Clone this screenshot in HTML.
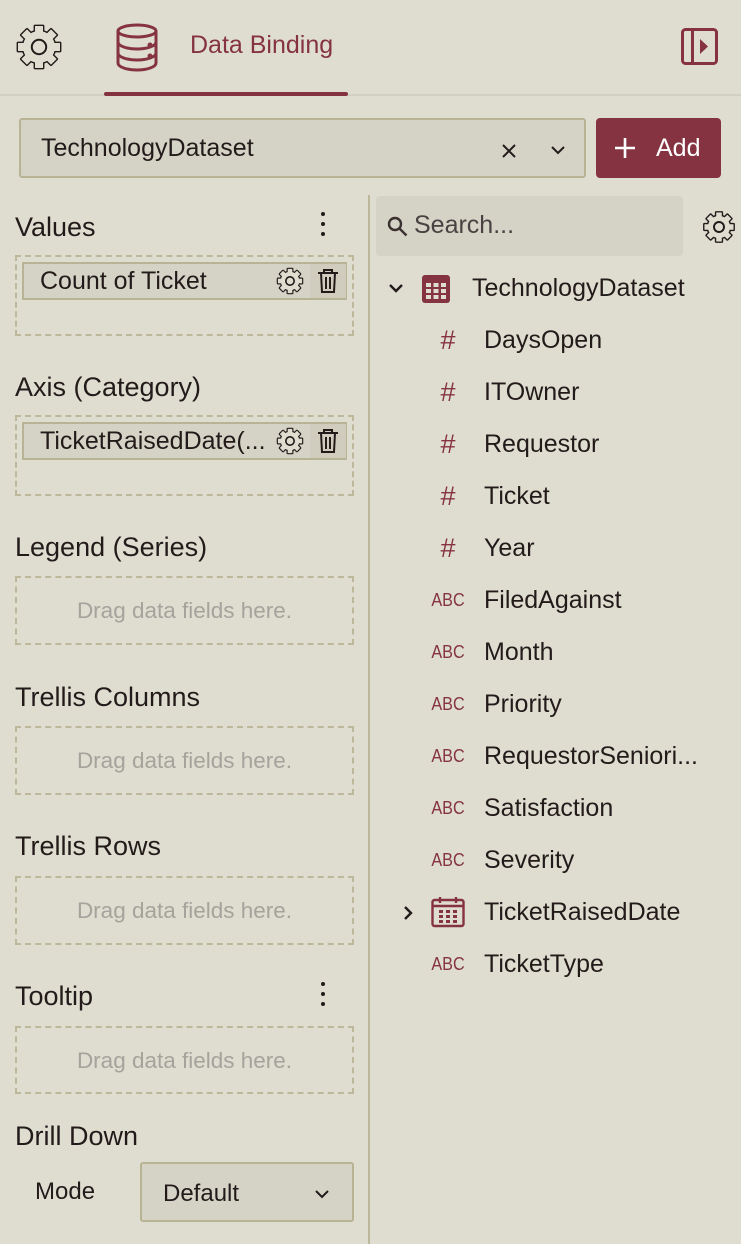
<!DOCTYPE html>
<html><head><meta charset="utf-8"><style>
*{box-sizing:border-box;margin:0;padding:0}
body{width:741px;height:1244px;background:#dfddd0;font-family:"Liberation Sans",sans-serif;color:#231a1a;position:relative;overflow:hidden}
.a{position:absolute}
.lbl{position:absolute;left:15px;font-size:27px;line-height:30px}
.dash{position:absolute;left:15px;width:339px;border:2px dashed #bdb89c}
.ph{color:#a5a39c;font-size:22.5px;text-align:center;line-height:65px}
.item{position:absolute;left:22px;width:325px;height:38px;background:#d5d3c6;border:2px solid #b8b394;font-size:25px;line-height:34px;padding-left:16px}
.row{position:absolute;left:484px;font-size:25px;line-height:30px}
.ic{position:absolute;left:432px;width:32px;text-align:center;color:#853340;line-height:30px}
.hash{font-size:27px}
.abc{font-size:18px;left:428px;width:40px;transform:scaleX(.9)}
</style></head><body>
<svg width="0" height="0" style="position:absolute"><defs>
<g id="gs"><circle cx="12" cy="12" r="8"/><g id="t"><rect x="10" y="1.5" width="4" height="5"/><rect x="10" y="17.5" width="4" height="5"/></g><use href="#t" transform="rotate(45 12 12)"/><use href="#t" transform="rotate(90 12 12)"/><use href="#t" transform="rotate(135 12 12)"/></g>
<g id="gear"><use href="#gs" fill="#231a1a" stroke="#231a1a" stroke-width="2" stroke-linejoin="round"/><use href="#gs" fill="#dfddd0"/><circle cx="12" cy="12" r="3.6" fill="none" stroke="#231a1a" stroke-width="1.4"/></g>
<g id="gear2"><use href="#gs" fill="#231a1a" stroke="#231a1a" stroke-width="1.4" stroke-linejoin="round"/><use href="#gs" fill="#dfddd0"/><circle cx="12" cy="12" r="3.6" fill="none" stroke="#231a1a" stroke-width="1"/></g>
</defs></svg>

<svg class="a" style="left:13px;top:21px" width="52" height="52" viewBox="-1 -1 26 26"><use href="#gear2"/></svg>
<svg class="a" style="left:114px;top:22px" width="46" height="50" viewBox="0 0 46 50" fill="none" stroke="#853340" stroke-width="3"><ellipse cx="23" cy="9" rx="19" ry="6"/><path d="M4 9v32c0 4 9 7 19 7s19-3 19-7V9M4 20c0 4 9 7 19 7s19-3 19-7M4 31c0 4 9 7 19 7s19-3 19-7"/><circle cx="36" cy="23" r="1" fill="#853340"/><circle cx="36" cy="34" r="1" fill="#853340"/></svg>
<div class="a" style="left:190px;top:31px;font-size:25px;color:#853340">Data Binding</div>
<div class="a" style="left:0;top:94px;width:741px;height:2px;background:#d2d0c4"></div>
<div class="a" style="left:104px;top:92px;width:244px;height:4px;background:#853340;border-radius:2px"></div>
<svg class="a" style="left:681px;top:28px" width="37" height="37" viewBox="0 0 37 37"><rect x="1.5" y="1.5" width="34" height="34" rx="3" fill="none" stroke="#853340" stroke-width="3"/><rect x="10" y="2" width="3" height="33" fill="#853340"/><path d="M19 11l8 7.5-8 7.5z" fill="#853340"/></svg>

<div class="a" style="left:19px;top:118px;width:567px;height:60px;background:#d5d3c6;border:2px solid #b8b394;border-radius:3px"></div>
<div class="a" style="left:41px;top:134px;font-size:25px">TechnologyDataset</div>
<svg class="a" style="left:501px;top:143px" width="16" height="16"><path d="M2 2l12 12M14 2L2 14" stroke="#231a1a" stroke-width="2"/></svg>
<svg class="a" style="left:550px;top:144px" width="16" height="12"><path d="M2 3l6 6 6-6" fill="none" stroke="#231a1a" stroke-width="2"/></svg>
<div class="a" style="left:596px;top:118px;width:125px;height:60px;background:#853340;border-radius:4px;color:#fff;font-size:25px;line-height:60px"><svg style="position:absolute;left:18px;top:19px" width="22" height="22"><path d="M11 1v20M1 11h20" stroke="#fff" stroke-width="2.6"/></svg><span style="position:absolute;left:60px">Add</span></div>

<div class="a" style="left:368px;top:195px;width:2px;height:1049px;background:#bdb89c"></div>

<div class="lbl" style="top:212px">Values</div>
<div class="a" style="left:321px;top:212px;width:4px;font-size:0"><div style="width:4px;height:4px;background:#231a1a;border-radius:2px;margin-bottom:6px"></div><div style="width:4px;height:4px;background:#231a1a;border-radius:2px;margin-bottom:6px"></div><div style="width:4px;height:4px;background:#231a1a;border-radius:2px"></div></div>
<div class="dash" style="top:255px;height:81px"></div>
<div class="item" style="top:262px">Count of Ticket</div>

<div class="lbl" style="top:372px">Axis (Category)</div>
<div class="dash" style="top:415px;height:81px"></div>
<div class="item" style="top:422px">TicketRaisedDate(...</div>

<svg class="a" style="left:275px;top:266px" width="30" height="30" viewBox="-1 -1 26 26"><use href="#gear"/></svg>
<div class="a" style="left:310px;top:264px;width:36px;height:34px;background:#d0cdbf"></div>
<svg class="a" style="left:316px;top:268px" width="24" height="26" viewBox="0 0 24 26" fill="none" stroke="#231a1a" stroke-width="2"><path d="M2 5h20M8 5V2h8v3M5 5l1 19h12l1-19M10 9v12M14 9v12"/></svg>
<svg class="a" style="left:275px;top:426px" width="30" height="30" viewBox="-1 -1 26 26"><use href="#gear"/></svg>
<div class="a" style="left:310px;top:424px;width:36px;height:34px;background:#d0cdbf"></div>
<svg class="a" style="left:316px;top:428px" width="24" height="26" viewBox="0 0 24 26" fill="none" stroke="#231a1a" stroke-width="2"><path d="M2 5h20M8 5V2h8v3M5 5l1 19h12l1-19M10 9v12M14 9v12"/></svg>

<div class="lbl" style="top:532px">Legend (Series)</div>
<div class="dash ph" style="top:576px;height:69px">Drag data fields here.</div>
<div class="lbl" style="top:682px">Trellis Columns</div>
<div class="dash ph" style="top:726px;height:69px">Drag data fields here.</div>
<div class="lbl" style="top:831px">Trellis Rows</div>
<div class="dash ph" style="top:876px;height:69px">Drag data fields here.</div>
<div class="lbl" style="top:981px">Tooltip</div>
<div class="a" style="left:321px;top:982px;width:4px;font-size:0"><div style="width:4px;height:4px;background:#231a1a;border-radius:2px;margin-bottom:6px"></div><div style="width:4px;height:4px;background:#231a1a;border-radius:2px;margin-bottom:6px"></div><div style="width:4px;height:4px;background:#231a1a;border-radius:2px"></div></div>
<div class="dash ph" style="top:1026px;height:68px">Drag data fields here.</div>
<div class="lbl" style="top:1121px">Drill Down</div>
<div class="a" style="left:35px;top:1178px;font-size:24px">Mode</div>
<div class="a" style="left:140px;top:1162px;width:214px;height:60px;background:#d5d3c6;border:2px solid #b8b394;border-radius:3px;font-size:24px;line-height:60px;padding-left:21px">Default</div>
<svg class="a" style="left:314px;top:1188px" width="16" height="12"><path d="M2 3l6 6 6-6" fill="none" stroke="#231a1a" stroke-width="2"/></svg>

<div class="a" style="left:376px;top:196px;width:307px;height:60px;background:#d5d3c6;border-radius:4px"></div>
<svg class="a" style="left:387px;top:216px" width="22" height="22" fill="none" stroke="#3a3030" stroke-width="2.4"><circle cx="8" cy="8" r="6"/><path d="M12.5 12.5l7 7"/></svg>
<div class="a" style="left:414px;top:211px;font-size:25px;color:#4a4242">Search...</div>
<svg class="a" style="left:701px;top:209px" width="36" height="36" viewBox="-1 -1 26 26"><use href="#gear"/></svg>

<svg class="a" style="left:388px;top:282px" width="16" height="12"><path d="M2 3l6 6 6-6" fill="none" stroke="#231a1a" stroke-width="2.4"/></svg>
<svg class="a" style="left:422px;top:275px" width="28" height="28" viewBox="0 0 28 28"><rect width="28" height="28" rx="3" fill="#853340"/><g fill="#dfddd0"><rect x="4" y="8" width="5" height="4"/><rect x="11.5" y="8" width="5" height="4"/><rect x="19" y="8" width="5" height="4"/><rect x="4" y="14" width="5" height="4"/><rect x="11.5" y="14" width="5" height="4"/><rect x="19" y="14" width="5" height="4"/><rect x="4" y="20" width="5" height="4"/><rect x="11.5" y="20" width="5" height="4"/><rect x="19" y="20" width="5" height="4"/></g></svg>
<div class="row" style="left:472px;top:273px">TechnologyDataset</div>

<div class="ic hash" style="top:325px">#</div><div class="row" style="top:325px">DaysOpen</div>
<div class="ic hash" style="top:377px">#</div><div class="row" style="top:377px">ITOwner</div>
<div class="ic hash" style="top:429px">#</div><div class="row" style="top:429px">Requestor</div>
<div class="ic hash" style="top:481px">#</div><div class="row" style="top:481px">Ticket</div>
<div class="ic hash" style="top:533px">#</div><div class="row" style="top:533px">Year</div>
<div class="ic abc" style="top:585px">ABC</div><div class="row" style="top:585px">FiledAgainst</div>
<div class="ic abc" style="top:637px">ABC</div><div class="row" style="top:637px">Month</div>
<div class="ic abc" style="top:689px">ABC</div><div class="row" style="top:689px">Priority</div>
<div class="ic abc" style="top:741px">ABC</div><div class="row" style="top:741px">RequestorSeniori...</div>
<div class="ic abc" style="top:793px">ABC</div><div class="row" style="top:793px">Satisfaction</div>
<div class="ic abc" style="top:845px">ABC</div><div class="row" style="top:845px">Severity</div>
<svg class="a" style="left:402px;top:905px" width="12" height="16"><path d="M3 2l6 6-6 6" fill="none" stroke="#231a1a" stroke-width="2.4"/></svg>
<svg class="a" style="left:431px;top:896px" width="34" height="32" viewBox="0 0 34 32" fill="none" stroke="#853340" stroke-width="2.4"><rect x="1.5" y="4" width="31" height="26" rx="2"/><path d="M1.5 10h31M9 1v6M25 1v6"/><g fill="#853340" stroke="none"><rect x="8" y="14" width="4" height="3"/><rect x="15" y="14" width="4" height="3"/><rect x="22" y="14" width="4" height="3"/><rect x="8" y="19" width="4" height="3"/><rect x="15" y="19" width="4" height="3"/><rect x="22" y="19" width="4" height="3"/><rect x="8" y="24" width="4" height="3"/><rect x="15" y="24" width="4" height="3"/><rect x="22" y="24" width="4" height="3"/></g></svg>
<div class="row" style="top:897px">TicketRaisedDate</div>
<div class="ic abc" style="top:949px">ABC</div><div class="row" style="top:949px">TicketType</div>
</body></html>
